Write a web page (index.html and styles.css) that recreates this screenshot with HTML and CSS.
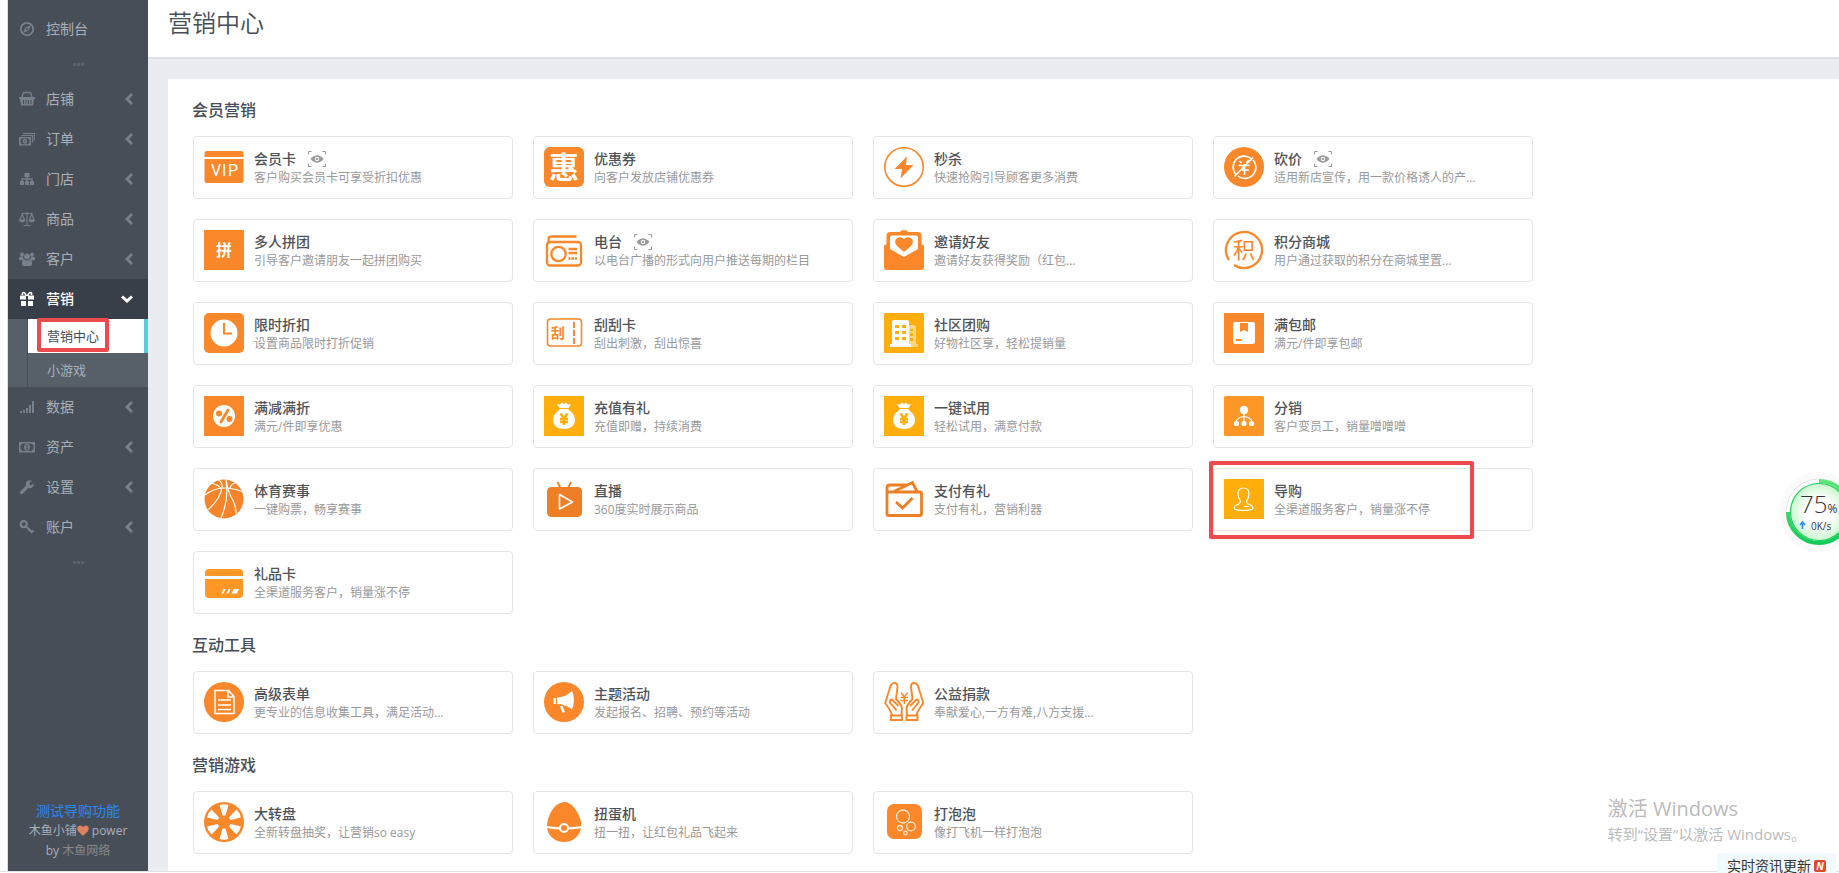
FILE: index.html
```html
<!DOCTYPE html>
<html lang="zh-CN">
<head>
<meta charset="utf-8">
<meta name="viewport" content="width=device-width, initial-scale=1">
<title>营销中心</title>
<link rel="stylesheet" href="styles.css">
</head>
<body>
<svg class="defs" aria-hidden="true">
  <symbol id="chev" viewBox="0 0 8 12"><path d="M7 1 2 6l5 5" fill="none" stroke="currentColor" stroke-width="2.800"/></symbol>
  <symbol id="eye" viewBox="0 0 18 16"><path d="M.5 3.500V.5h3M14.500.5h3v3M17.500 12.500v3h-3M3.500 15.500h-3v-3" fill="none" stroke="#999"/><path d="M2.500 8Q9 .5 15.500 8 9 15.500 2.500 8z" fill="#999"/><circle cx="9" cy="8" r="2.200" fill="#fff"/><circle cx="9" cy="8" r="1.200" fill="#999"/></symbol>
  <symbol id="bag" viewBox="0 0 40 40"><path fill="#ffae0c" d="M0 0h40v40H0z"/><path fill="#fff" d="m13 8 3 .5L18 6.500l2 1.500 2-1.500 2 2 3-.5-2.500 4h-9zM16 13h8l2 2c3.500 2.500 5 5.500 5 9 0 6-5 9-11 9S9 30 9 24c0-3.500 1.500-6.500 5-9z"/><path d="m16.500 17.500 3.500 5 3.500-5M16 23h8M16 26h8M20 22v7" fill="none" stroke="#ffae0c" stroke-width="2.600"/></symbol>
</svg>

<div class="app">
  <aside class="sidebar">
    <nav class="nav" aria-label="主菜单">
      <a class="nav-item" href="#"><svg class="nav-icon" viewBox="0 0 16 16"><circle cx="8" cy="8" r="6.200" fill="none" stroke="currentColor" stroke-width="1.800"/><path d="m12 4-2.500 5.500L4 12l2.500-5.500z" fill="currentColor"/><circle cx="8" cy="8" r="1" fill="#474e58"/></svg><span class="nav-label">控制台</span></a>
      <div class="dots"><i></i><i></i><i></i></div>
      <a class="nav-item" href="#"><svg class="nav-icon" viewBox="0 0 16 16"><path d="M3 6.500 4 2.500Q4.500 1.500 6 1.500h4q1.500 0 2 1l1 4" fill="none" stroke="currentColor" stroke-width="1.300"/><path d="M0 6h16v2h-1l-1 6.500H2L1 8H0z" fill="currentColor"/><path d="M4.500 9v4M7 9v4M9.500 9v4M12 9v4" stroke="#474e58"/></svg><span class="nav-label">店铺</span><svg class="chev"><use href="#chev"/></svg></a>
      <a class="nav-item" href="#"><svg class="nav-icon" viewBox="0 0 16 16"><path d="M4 2.500h11.500v7M2.500 4.500h11v7" fill="none" stroke="currentColor" stroke-width="1.200"/><path d="M0 6h12v8.500H0z" fill="currentColor"/><path d="M3 7.200h6l1.500 1.500v3L9 13.200H3l-1.500-1.500v-3z" fill="#474e58"/><ellipse cx="6" cy="10.200" rx="2.200" ry="2.500" fill="currentColor"/><circle cx="6" cy="10.200" r=".8" fill="#474e58"/></svg><span class="nav-label">订单</span><svg class="chev"><use href="#chev"/></svg></a>
      <a class="nav-item" href="#"><svg class="nav-icon" viewBox="0 0 16 16"><path d="M5.500 2h5v4h-5zM1 10h4v4H1zM6 10h4v4H6zM11 10h4v4h-4z" fill="currentColor"/><path d="M8 6v4M3 10V8h10v2" fill="none" stroke="currentColor" stroke-width="1.300"/></svg><span class="nav-label">门店</span><svg class="chev"><use href="#chev"/></svg></a>
      <a class="nav-item" href="#"><svg class="nav-icon" viewBox="0 0 16 16"><path d="M8 1v13M4.500 14.500h7M2.500 2.500h11M3.200 3 .8 9h4.800zM12.800 3l-2.400 6h4.800z" fill="none" stroke="currentColor" stroke-width="1.100"/><path d="M0 9h6.400q-.6 2.500-3.200 2.500T0 9zM9.600 9H16q-.6 2.500-3.200 2.500T9.600 9z" fill="currentColor"/></svg><span class="nav-label">商品</span><svg class="chev"><use href="#chev"/></svg></a>
      <a class="nav-item" href="#"><svg class="nav-icon" viewBox="0 0 16 16" fill="currentColor"><circle cx="3" cy="3.500" r="2"/><circle cx="13" cy="3.500" r="2"/><circle cx="8" cy="5.500" r="2.900"/><path d="M0 9V7.500Q0 5.500 2 5.500h2q0 2 1 3L3.500 9.500zM16 9V7.500q0-2-2-2h-2q0 2-1 3l1.500 1zM3 13q0-4.500 2.500-4.500 1 1 2.500 1t2.500-1Q13 8.500 13 13q0 2-2 2H5q-2 0-2-2z"/></svg><span class="nav-label">客户</span><svg class="chev"><use href="#chev"/></svg></a>
      <a class="nav-item nav-item-active" href="#"><svg class="nav-icon" viewBox="0 0 16 16"><path d="M1 4.500h6v4H1zM9 4.500h6v4H9zM2 10h5v5H2zM9 10h5v5H9z" fill="currentColor"/><path d="M7.500 5Q6 1.500 4.500 1.500T3.500 4M8.500 5q1.500-3.500 3-3.500t1 2.500" fill="none" stroke="currentColor" stroke-width="1.600"/></svg><span class="nav-label">营销</span><svg class="chev-down" viewBox="0 0 12 8"><path d="m1 1.500 5 4.500 5-4.500" fill="none" stroke="currentColor" stroke-width="3"/></svg></a>
      <div class="subnav">
        <a class="sub-item sub-item-active" href="#">营销中心<span class="mark mark-nav"></span></a>
        <a class="sub-item" href="#">小游戏</a>
      </div>
      <a class="nav-item" href="#"><svg class="nav-icon" viewBox="0 0 16 16"><path d="M1 12h2v2H1zM4 11h2v3H4zM7 9h2v5H7zM10 6h2v8h-2zM13 2h2v12h-2z" fill="currentColor"/></svg><span class="nav-label">数据</span><svg class="chev"><use href="#chev"/></svg></a>
      <a class="nav-item" href="#"><svg class="nav-icon" viewBox="0 0 16 16"><path d="M0 3h16v10.500H0z" fill="currentColor"/><path d="M3.500 4.500h9l2 2v3.500l-2 2h-9l-2-2V6.500z" fill="#474e58"/><ellipse cx="8" cy="8.200" rx="2.800" ry="3.500" fill="currentColor"/><path d="M7 7l1.200-.7V10M7 10.200h2.400" fill="none" stroke="#474e58"/></svg><span class="nav-label">资产</span><svg class="chev"><use href="#chev"/></svg></a>
      <a class="nav-item" href="#"><svg class="nav-icon" viewBox="0 0 16 16"><path d="m2.500 13.500 6-6" stroke="currentColor" stroke-width="3.200" stroke-linecap="round"/><path d="M14.800 4.500a4 4 0 1 1-3.300-3.300L13 2l-2.500 1.500v2l1.500.8z" fill="currentColor"/></svg><span class="nav-label">设置</span><svg class="chev"><use href="#chev"/></svg></a>
      <a class="nav-item" href="#"><svg class="nav-icon" viewBox="0 0 16 16" fill="none" stroke="currentColor"><circle cx="4.800" cy="5.200" r="3" stroke-width="2.200"/><path d="m7 7.500 6.500 6M9.500 12l2-2M12 14l2.500-2.500" stroke-width="1.800"/></svg><span class="nav-label">账户</span><svg class="chev"><use href="#chev"/></svg></a>
      <div class="dots"><i></i><i></i><i></i></div>
    </nav>
    <footer class="side-foot">
      <a class="foot-link" href="#">测试导购功能</a>
      <p class="foot-text">木鱼小铺<svg class="heart" viewBox="0 0 12 11"><path d="M6 11 1 6Q-.5 3.500 1 1.500 3.500-.8 6 2q2.500-2.800 5-.5 1.500 2 0 4.500z" fill="#de815c"/></svg> power<br>by <a class="foot-brand" href="#">木鱼网络</a></p>
    </footer>
  </aside>

  <main class="main">
    <header class="page-head"><h1 class="page-title">营销中心</h1></header>
    <div class="panel">
      <h2 class="section-title">会员营销</h2>
      <div class="cards">
        <a class="card" href="#"><svg class="icon" viewBox="0 0 40 40"><path fill="#fa8729" d="M3 4h34q2.500 0 2.500 2.500V10H.5V6.500Q.5 4 3 4zM.5 12h39v21.500q0 2.500-2.500 2.500H3Q.5 36 .5 33.500z"/><g class="vip"><text x="7" y="29">V</text><text x="18" y="29">I</text><text x="24" y="29">P</text></g></svg><span class="info"><span class="name">会员卡<svg class="eye"><use href="#eye"/></svg></span><span class="desc">客户购买会员卡可享受折扣优惠</span></span></a>
        <a class="card" href="#"><svg class="icon" viewBox="0 0 40 40"><rect width="40" height="40" rx="6" fill="#fa8729"/><text class="glyph glyph-xl" x="20" y="31">惠</text></svg><span class="info"><span class="name">优惠券</span><span class="desc">向客户发放店铺优惠券</span></span></a>
        <a class="card" href="#"><svg class="icon" viewBox="0 0 40 40"><circle cx="20" cy="20" r="19.200" fill="none" stroke="#fa8729" stroke-width="1.600"/><path fill="#fa8729" d="M23 9.500 10.500 22H18l-1.500 9.500L29.500 18H22z"/></svg><span class="info"><span class="name">秒杀</span><span class="desc">快速抢购引导顾客更多消费</span></span></a>
        <a class="card" href="#"><svg class="icon" viewBox="0 0 40 40"><circle cx="20" cy="20" r="20" fill="#fa8729"/><g fill="none" stroke="#fff" stroke-width="1.600"><path d="M27 11.500A11 11 0 0 0 12 27.500M14 29a11 11 0 0 0 15-16M29 10.500 10.500 29.500M15.500 14l2 2M24.500 13l-2 3M14.500 18.500h11M18 23h7M20.500 17v11"/></g></svg><span class="info"><span class="name">砍价<svg class="eye"><use href="#eye"/></svg></span><span class="desc">适用新店宣传，用一款价格诱人的产...</span></span></a>

        <a class="card" href="#"><svg class="icon" viewBox="0 0 40 40"><path fill="#fa8729" d="M0 0h40v40H0z"/><text class="glyph glyph-m" x="20" y="26">拼</text></svg><span class="info"><span class="name">多人拼团</span><span class="desc">引导客户邀请朋友一起拼团购买</span></span></a>
        <a class="card" href="#"><svg class="icon" viewBox="0 0 40 40"><g fill="none" stroke="#fa8729" stroke-width="2.300"><path d="M4.500 12V9.500q0-3 3-3h25"/><rect x="3" y="12" width="34" height="23.500" rx="3"/><circle cx="14.500" cy="24" r="7.200"/><path d="M24.500 19H33M24.500 23H33M24.500 28.500H33"/></g><path stroke="#fff" d="M27 27v3M30.500 27v3"/></svg><span class="info"><span class="name">电台<svg class="eye"><use href="#eye"/></svg></span><span class="desc">以电台广播的形式向用户推送每期的栏目</span></span></a>
        <a class="card" href="#"><svg class="icon" viewBox="0 0 40 40"><path fill="#fa8729" d="M6 2h10q1-2 4-2t4 2h10q3 0 3.500 3v9l2.500 2v21q0 3-3 3H3q-3 0-3-3V16l2.500-2V5Q3 2 6 2z"/><path fill="#fff" d="M8 5.500h24q2 0 2 2V19l-14 8-14-8V7.500q0-2 2-2z"/><path fill="#fa8729" d="m20 22-7-6q-3-3.500-1-7 3.500-3.500 8 0 4.500-3.500 8 0 2 3.500-1 7z"/></svg><span class="info"><span class="name">邀请好友</span><span class="desc">邀请好友获得奖励（红包...</span></span></a>
        <a class="card" href="#"><svg class="icon" viewBox="0 0 40 40"><path d="M5 30A18 18 0 1 1 10 35" fill="none" stroke="#fa8729" stroke-width="2.300"/><text class="glyph glyph-l glyph-orange" x="20" y="28">积</text></svg><span class="info"><span class="name">积分商城</span><span class="desc">用户通过获取的积分在商城里置...</span></span></a>

        <a class="card" href="#"><svg class="icon" viewBox="0 0 40 40"><rect width="40" height="40" rx="5" fill="#fa8729"/><circle cx="20" cy="20" r="13.500" fill="#fff"/><path d="M20 10v10.500h8" fill="none" stroke="#fa8729" stroke-width="2"/></svg><span class="info"><span class="name">限时折扣</span><span class="desc">设置商品限时打折促销</span></span></a>
        <a class="card" href="#"><svg class="icon" viewBox="0 0 40 40"><rect x="3.500" y="6" width="34" height="27" rx="3" fill="none" stroke="#fa8729" stroke-width="1.600"/><text class="glyph glyph-s glyph-orange" x="14" y="25">刮</text><path d="M30 9v22" stroke="#fa8729" stroke-width="2" stroke-dasharray="6 2"/></svg><span class="info"><span class="name">刮刮卡</span><span class="desc">刮出刺激，刮出惊喜</span></span></a>
        <a class="card" href="#"><svg class="icon" viewBox="0 0 40 40"><rect width="40" height="40" rx="1" fill="#ffae0c"/><path fill="#ffd77f" d="M25 12h5q2 0 2 2v17h2v3h-9z"/><path fill="#fff" d="M10 7h13q2 0 2 2v22h2v3H6v-3h2V9q0-2 2-2z"/><path fill="#ffae0c" d="M11 12h4v3h-4zM18 12h4v3h-4zM11 18h4v3h-4zM18 18h4v3h-4zM11 24h4v3h-4zM18 24h4v3h-4zM26 16h3v2h-3zM26 20h3v3h-3zM26 25h3v3h-3z"/></svg><span class="info"><span class="name">社区团购</span><span class="desc">好物社区享，轻松提销量</span></span></a>
        <a class="card" href="#"><svg class="icon" viewBox="0 0 40 40"><path fill="#fa8729" d="M0 0h40v40H0z"/><rect x="9" y="9" width="22" height="22" rx="2" fill="#fff"/><path fill="#fa8729" d="M16 10h8v9L20 17l-4 2zM12 26h5.500v2H12z"/></svg><span class="info"><span class="name">满包邮</span><span class="desc">满元/件即享包邮</span></span></a>

        <a class="card" href="#"><svg class="icon" viewBox="0 0 40 40"><path fill="#fa8729" d="M0 0h40v40H0z"/><circle cx="20" cy="20" r="11" fill="#fff"/><circle cx="15" cy="17.500" r="3" fill="#fa8729"/><circle cx="25.500" cy="23" r="3" fill="#fa8729"/><path d="m17 26 7-12" stroke="#fa8729" stroke-width="2.800" stroke-linecap="round"/></svg><span class="info"><span class="name">满减满折</span><span class="desc">满元/件即享优惠</span></span></a>
        <a class="card" href="#"><svg class="icon"><use href="#bag"/></svg><span class="info"><span class="name">充值有礼</span><span class="desc">充值即赠，持续消费</span></span></a>
        <a class="card" href="#"><svg class="icon"><use href="#bag"/></svg><span class="info"><span class="name">一键试用</span><span class="desc">轻松试用，满意付款</span></span></a>
        <a class="card" href="#"><svg class="icon" viewBox="0 0 40 40"><rect width="40" height="40" rx="1.500" fill="#ff9727"/><g fill="#fff"><circle cx="20" cy="14" r="4.200"/><circle cx="12.500" cy="27.500" r="2.600"/><circle cx="20" cy="27.500" r="2.600"/><circle cx="27.500" cy="27.500" r="2.600"/></g><path d="M20 15v12M12 27q0-5.500 8-6.500 8 1 8 6.500" fill="none" stroke="#fff" stroke-width="1.200"/></svg><span class="info"><span class="name">分销</span><span class="desc">客户变员工，销量噌噌噌</span></span></a>

        <a class="card" href="#"><svg class="icon" viewBox="0 0 40 40"><circle cx="20" cy="20" r="19.500" fill="#f5842a"/><path d="M1 16Q10 9 20 9t19 4M22 0q2 17-1 27-2 7-4 12.500M14.500 1q4 2 3.500 7-1 11-13.500 22.500M22 .5q2 13 7 21 3 6 3 13M31 4q-4 1-5 5M8 4.500q6 1 9 5" fill="none" stroke="#fff" stroke-width="1.200"/></svg><span class="info"><span class="name">体育赛事</span><span class="desc">一键购票，畅享赛事</span></span></a>
        <a class="card" href="#"><svg class="icon" viewBox="0 0 40 40"><rect x="3" y="8" width="35" height="30" rx="4.500" fill="#ed7f26"/><path d="m13.500 3 3 6M27 3l-3 6" stroke="#ed7f26" stroke-width="1.800"/><path d="M15.500 15.500v14.500l13-7z" fill="none" stroke="#fff" stroke-width="1.600" stroke-linejoin="round"/></svg><span class="info"><span class="name">直播</span><span class="desc">360度实时展示商品</span></span></a>
        <a class="card" href="#"><svg class="icon" viewBox="0 0 40 40"><g fill="none" stroke="#ed7f26" stroke-width="2.800"><rect x="3" y="13" width="34.500" height="23.500" rx="1.500"/><path d="M3 14V9q0-3 3-3h17M10 12.500 28.500 3.500l4.500 9"/><path d="m12 23 6.500 6 10-10"/></g></svg><span class="info"><span class="name">支付有礼</span><span class="desc">支付有礼，营销利器</span></span></a>
        <a class="card" href="#"><svg class="icon" viewBox="0 0 40 40"><path fill="#ffae0c" d="M0 0h40v40H0z"/><path d="M16.500 22.500Q14 18 14 15q0-6 5.500-6t5.500 6q0 3-2.500 7.500.5 2.500 4 3.500 3 1 2 4-3 1.500-9 1.500t-9-1.500q-1-3 2-4 3.500-1 4-3.500zM20 27.500h5" fill="none" stroke="#fff" stroke-width="1.200"/></svg><span class="info"><span class="name">导购</span><span class="desc">全渠道服务客户，销量涨不停</span></span><span class="mark mark-card"></span></a>

        <a class="card" href="#"><svg class="icon" viewBox="0 0 40 40"><path fill="#ff9727" d="M5 7h30q4 0 4 4v3H1v-3q0-4 4-4zM1 17h38v15q0 4-4 4H5q-4 0-4-4z"/><path fill="#fff" d="M19.500 27h2l-2 4.500h-2zM24.500 27h2l-2 4.500h-2zM29.500 27H35l-2 4.500h-5.500z"/></svg><span class="info"><span class="name">礼品卡</span><span class="desc">全渠道服务客户，销量涨不停</span></span></a>
      </div>

      <h2 class="section-title">互动工具</h2>
      <div class="cards">
        <a class="card" href="#"><svg class="icon" viewBox="0 0 40 40"><circle cx="20" cy="20" r="20" fill="#fa8729"/><path d="M11 8.500h13.500l5.500 6V31.500H11zM24 9v6h6M14 18h13M14 23h13M14 27.500h13" fill="none" stroke="#fff" stroke-width="1.500"/></svg><span class="info"><span class="name">高级表单</span><span class="desc">更专业的信息收集工具，满足活动...</span></span></a>
        <a class="card" href="#"><svg class="icon" viewBox="0 0 40 40"><circle cx="20" cy="20" r="20" fill="#fa8729"/><path fill="#fff" d="M9.500 16h2.500v6H9.500zM13 15.500q8 0 15-6.500 2 4 2 9t-2 9.500Q21 22 13 22zM16 24h2.500l2.500 6q-2 1-3 0z"/></svg><span class="info"><span class="name">主题活动</span><span class="desc">发起报名、招聘、预约等活动</span></span></a>
        <a class="card" href="#"><svg class="icon" viewBox="0 0 40 40"><g fill="none" stroke="#fa8729" stroke-width="1.900"><path d="M7 38v-4.500h11V38zM8 33Q7 29 1.200 21L6.500 4Q8 1 10.500 1q3 0 3 4L12 17q5 5 6 9l-.5 7M12.500 28.500 6 20.500q-.5-3 2-3l6.500 6.500M33.500 38v-4.500h-11V38zM32.500 33q1-4 6.800-12L34 4q-1.500-3-4-3-3 0-3 4l1.500 12q-5 5-6 9l.5 7M28 28.500l6.500-8q.5-3-2-3L26 24"/><path d="m17 10.500 3.300 4.500 3.300-4.500M16.500 15.500h7.500M16.500 18.500h7.500M20.300 15v7" stroke-width="1.400"/></g></svg><span class="info"><span class="name">公益捐款</span><span class="desc">奉献爱心,一方有难,八方支援...</span></span></a>
      </div>

      <h2 class="section-title">营销游戏</h2>
      <div class="cards">
        <a class="card" href="#"><svg class="icon" viewBox="0 0 40 40"><circle cx="20" cy="20" r="20" fill="#fa8729"/><g fill="#fff"><path id="blade" d="M18.500 13.500 15.500 3q4.500-1.500 9 0L21.500 13.500z"/><use href="#blade" transform="rotate(60 20 20)"/><use href="#blade" transform="rotate(120 20 20)"/><use href="#blade" transform="rotate(180 20 20)"/><use href="#blade" transform="rotate(240 20 20)"/><use href="#blade" transform="rotate(300 20 20)"/></g></svg><span class="info"><span class="name">大转盘</span><span class="desc">全新转盘抽奖，让营销so easy</span></span></a>
        <a class="card" href="#"><svg class="icon" viewBox="0 0 40 40"><path fill="#fa8729" d="M20 0q7 0 12.500 9T37 24q0 7-5 11.500T20 40 8 35.500 3 24 7.500 9 20 0z"/><path d="M2 25q18 3 36 0" fill="none" stroke="#fff" stroke-width="2"/><circle cx="20" cy="26" r="4" fill="#fa8729" stroke="#fff" stroke-width="2"/></svg><span class="info"><span class="name">扭蛋机</span><span class="desc">扭一扭，让红包礼品飞起来</span></span></a>
        <a class="card" href="#"><svg class="icon" viewBox="0 0 40 40"><rect x="3" y="2" width="35" height="35" rx="7" fill="#fa8729"/><g fill="none" stroke="#ffe3cb" stroke-width="1.300"><circle cx="19" cy="14.500" r="6.500"/><circle cx="27" cy="24.500" r="4.300"/><circle cx="16" cy="26" r="2.500"/><circle cx="21.500" cy="31" r="1.800"/></g></svg><span class="info"><span class="name">打泡泡</span><span class="desc">像打飞机一样打泡泡</span></span></a>
      </div>
    </div>
  </main>
</div>

<div class="meter">
  <svg class="meter-ring" viewBox="0 0 80 80" aria-hidden="true">
    <defs>
      <linearGradient id="ring" x1="0" y1="0" x2="0" y2="1"><stop offset="0" stop-color="#5ee676"/><stop offset="1" stop-color="#14cb59"/></linearGradient>
      <radialGradient id="core"><stop offset=".5" stop-color="#fff"/><stop offset="1" stop-color="#c9f7cd"/></radialGradient>
    </defs>
    <circle cx="40" cy="40" r="40" fill="#fafafa"/><circle cx="40" cy="40" r="33" fill="#fff" stroke="#e4e4e4"/>
    <path d="M40 9a31 31 0 1 1-31 31" fill="none" stroke="url(#ring)" stroke-width="4"/>
    <circle cx="40" cy="40" r="28.500" fill="url(#core)" stroke="#1dcd5e" stroke-width="1.200"/>
    <path d="M23.500 57V51M21 53l2.500-3 2.500 3" fill="none" stroke="#2d8cf0" stroke-width="1.600"/>
  </svg>
  <span class="meter-value">75<small class="meter-unit">%</small></span>
  <span class="meter-speed">0K/s</span>
</div>

<div class="watermark"><p class="wm-title">激活 Windows</p><p class="wm-text">转到“设置”以激活 Windows。</p></div>
<div class="ticker">实时资讯更新<span class="ticker-badge">N</span></div>
</body>
</html>
```
FILE: styles.css
```css
* { box-sizing: border-box; }

body {
  margin: 0;
  height: 100vh;
  overflow: hidden;
  position: relative;
  background: #fff;
  color: #474e58;
  font: 14px/20px "Open Sans", "Noto Sans CJK SC", sans-serif;
}

a { color: inherit; text-decoration: none; }
h1, h2, p { margin: 0; }
svg { display: block; flex: none; }
.defs { display: none; }

.app {
  display: flex;
  height: calc(100vh - 1px);
  padding-left: 7px;
  border-bottom: 1px solid #e0e2e4;
}

/* Sidebar */
.sidebar {
  width: 141px;
  flex: none;
  display: flex;
  flex-direction: column;
  justify-content: space-between;
  padding-top: 9px;
  border-left: 1px solid #dfe2e5;
  background: #474e58;
  color: #a9b0b9;
}
.nav-item {
  display: flex;
  align-items: center;
  height: 40px;
  padding: 0 15px 0 11px;
}
.nav-icon { width: 16px; height: 16px; color: #78808b; }
.nav-label { flex: 1; margin-left: 11px; }
.chev { width: 8px; height: 12px; color: #78808b; }
.chev-down { width: 12px; height: 8px; }
.nav-item-active { background: #383f49; color: #fff; font-weight: 500; }
.nav-item-active .nav-icon { color: #fff; }
.dots {
  display: flex;
  justify-content: center;
  align-items: center;
  gap: 1px;
  height: 30px;
}
.dots i { width: 3px; height: 3px; background: #59616b; }

.subnav {
  padding-left: 19px;
  background: #575f69;
}
.sub-item {
  display: block;
  position: relative;
  padding-left: 19px;
  border-left: 1px solid #474e58;
  font-size: 13px;
  line-height: 34px;
}
.sub-item-active {
  background: #fff;
  border-right: 4px solid #5bcbdc;
  color: #474e58;
}

.side-foot {
  padding-bottom: 10px;
  text-align: center;
}
.foot-link { color: #2d87f0; }
.foot-text { font-size: 12px; }
.foot-brand { color: #888; }
.heart { display: inline-block; width: 12px; height: 11px; vertical-align: -1px; }

/* Main column */
.main {
  flex: 1;
  min-width: 0;
  display: flex;
  flex-direction: column;
  background: #e9edf2;
}
.page-head {
  height: 59px;
  flex: none;
  padding: 7px 20px 0;
  border-bottom: 2px solid #dae0e7;
  background: #fff;
}
.page-title { font-size: 24px; line-height: 32px; font-weight: 350; }
.panel {
  flex: 1;
  margin: 20px 0 0 20px;
  padding: 0 24px;
  background: #fff;
}
.section-title {
  padding: 20px 0 15px;
  font-size: 16px;
  line-height: 22px;
  font-weight: 500;
}
.cards {
  display: grid;
  grid-template-columns: repeat(4, minmax(0, 320px));
  gap: 20px;
  padding-left: 1px;
}
.card {
  position: relative;
  display: flex;
  align-items: flex-start;
  gap: 10px;
  padding: 10px 10px 11px;
  border: 1px solid #e5e5e5;
  border-radius: 4px;
}
.icon { width: 40px; height: 40px; overflow: visible; }
.info { display: flex; flex-direction: column; min-width: 0; padding-top: 2px; }
.name {
  display: flex;
  align-items: center;
  gap: 12px;
  font-weight: 500;
  color: #4f5257;
}
.eye { width: 18px; height: 16px; }
.desc {
  font-size: 12px;
  line-height: 18px;
  color: #999;
  white-space: nowrap;
}

/* Characters inside icons */
.vip text { font: 16px Roboto, sans-serif; fill: #fff; }
.glyph { font-family: "Noto Sans CJK SC", sans-serif; font-weight: 500; text-anchor: middle; fill: #fff; }
.glyph-xl { font-size: 30px; font-weight: 700; }
.glyph-l { font-size: 22px; font-weight: 400; }
.glyph-m { font-size: 16px; font-weight: 700; }
.glyph-s { font-size: 14px; font-weight: 700; }
.glyph-orange { fill: #fa8729; }

/* Red callout frames */
.mark {
  position: absolute;
  border: 4px solid #ec4a4d;
  border-radius: 2px;
}
.mark-nav { left: 9px; top: -1px; width: 72px; height: 34px; }
.mark-card { left: -5px; top: -8px; width: 265px; height: 78px; }

/* Desktop overlays */
.meter {
  position: absolute;
  right: -20px;
  top: 472px;
  width: 80px;
  height: 80px;
  color: #333;
}
.meter-ring { width: 80px; height: 80px; }
.meter-value {
  position: absolute;
  left: 21px;
  top: 19px;
  font-size: 24px;
  line-height: 26px;
  font-weight: 300;
  white-space: nowrap;
}
.meter-unit { font-size: 12px; font-weight: 400; }
.meter-speed {
  position: absolute;
  left: 32px;
  top: 48px;
  font-size: 10px;
  line-height: 12px;
}
.watermark {
  position: absolute;
  right: 33px;
  bottom: 28px;
  color: #bbb;
}
.wm-title { font-size: 20px; line-height: 28px; }
.wm-text { font-size: 15px; line-height: 22px; }
.ticker {
  position: absolute;
  right: 3px;
  bottom: 0;
  display: flex;
  align-items: center;
  gap: 3px;
  height: 20px;
  padding: 5px 10px 0;
  border-radius: 3px 3px 0 0;
  background: #f1fbfd;
  color: #333;
  white-space: nowrap;
}
.ticker-badge {
  width: 12px;
  height: 12px;
  border-radius: 2px;
  background: #e0482c;
  color: #fff;
  font: italic 700 10px/12px "Open Sans", sans-serif;
  text-align: center;
}
```
